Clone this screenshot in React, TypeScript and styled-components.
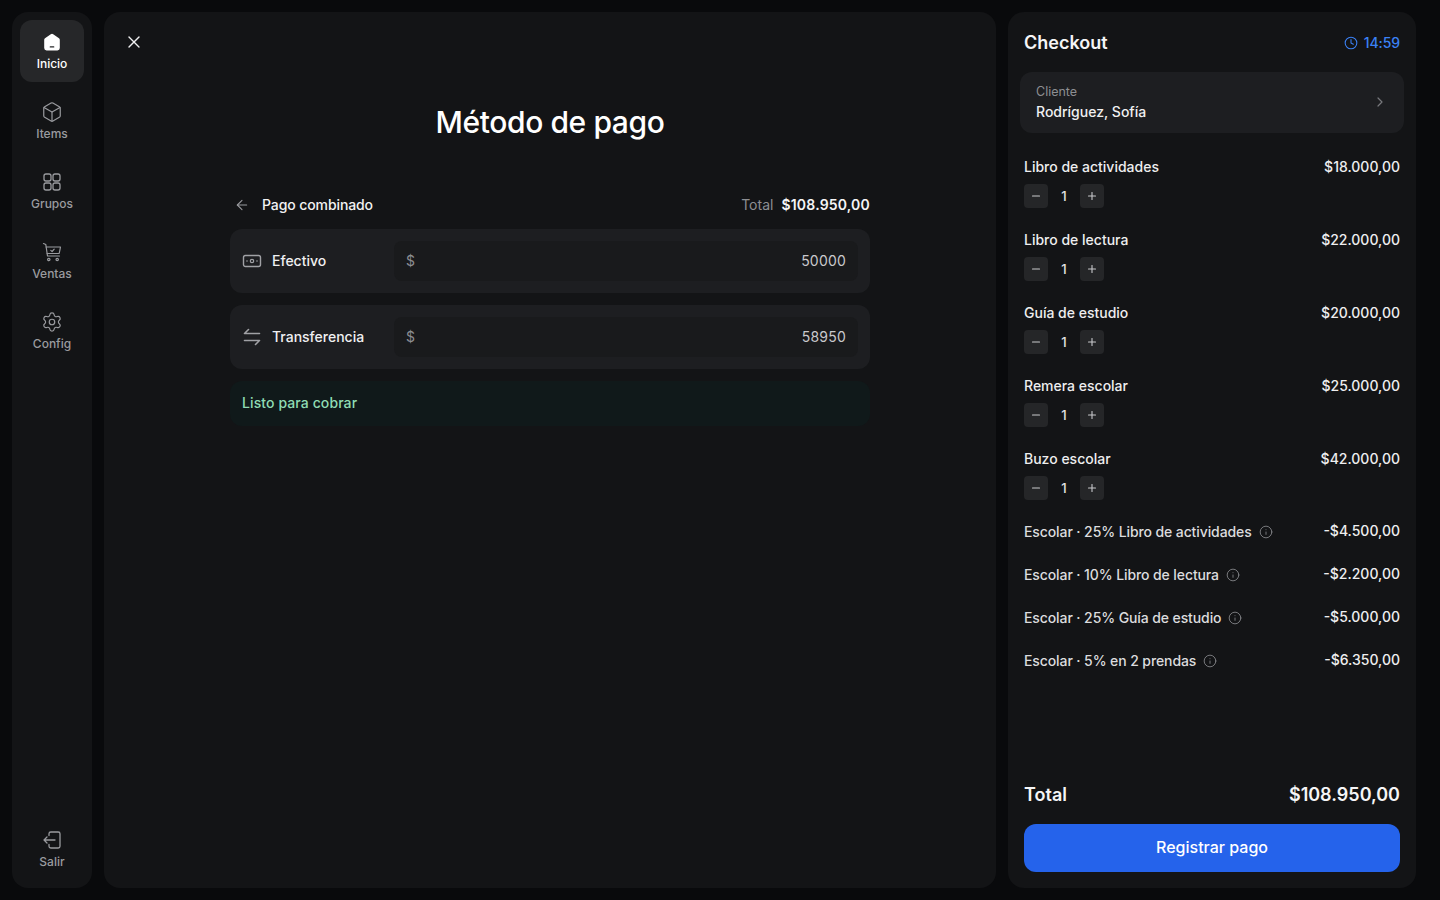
import React from 'react';
import styled, { createGlobalStyle } from 'styled-components';
import {
  ArrowLeft,
  Box,
  ChevronRight,
  Clock,
  Info,
  Minus,
  Plus,
  Settings,
  X,
} from 'lucide-react';

const GlobalStyle = createGlobalStyle`
  * { box-sizing: border-box; }
  html, body { margin: 0; height: 100%; }
  body {
    background: #090a0c;
    color: #f2f2f3;
    font-family: Inter, "Noto Sans", sans-serif;
    overflow: hidden;
  }
`;

const Page = styled.div`
  width: 100%;
  height: 900px;
  padding: 12px 24px 12px 12px;
  display: grid;
  grid-template-columns: 80px 1fr 408px;
  gap: 12px;
`;

const Panel = styled.div`
  background: #131416;
  border-radius: 16px;
  min-height: 0;
`;

const Sidebar = styled(Panel)`
  padding: 8px;
  display: flex;
  flex-direction: column;
  gap: 8px;
`;

const NavItem = styled.button<{ $active?: boolean; $bottom?: boolean }>`
  width: 64px;
  height: 62px;
  border: 0;
  padding: 11px 0 0;
  border-radius: 12px;
  background: ${(p) => (p.$active ? '#262729' : 'transparent')};
  color: ${(p) => (p.$active ? '#ffffff' : '#9a9b9f')};
  font: 500 12px/16px Inter, sans-serif;
  display: flex;
  flex-direction: column;
  align-items: center;
  gap: 3px;
  margin-top: ${(p) => (p.$bottom ? 'auto' : '0')};
  svg { display: block; }
`;

const Main = styled(Panel)`
  padding: 20px 20px 0;
  display: flex;
  flex-direction: column;
  align-items: center;
`;

const CloseButton = styled.button`
  align-self: flex-start;
  width: 20px;
  height: 20px;
  border: 0;
  padding: 0;
  background: none;
  color: #f0f0f1;
  display: flex;
`;

const Title = styled.h1`
  margin: 50px 0 0;
  font: 500 30px/40px Inter, sans-serif;
  letter-spacing: -0.4px;
  color: #ffffff;
`;

const Content = styled.div`
  width: 640px;
  margin-top: 51px;
  display: flex;
  flex-direction: column;
  gap: 12px;
`;

const ModeRow = styled.div`
  height: 24px;
  display: flex;
  align-items: center;
  justify-content: space-between;
`;

const ModeLeft = styled.div`
  display: flex;
  align-items: center;
  gap: 12px;
  padding-left: 4px;
  color: #9a9b9f;
  font: 500 14px/20px Inter, sans-serif;
  letter-spacing: -0.1px;
  span { color: #f2f2f3; }
`;

const ModeTotal = styled.div`
  display: flex;
  gap: 8px;
  font: 400 14px/20px Inter, sans-serif;
  color: #8d8e92;
  strong { font-weight: 600; color: #f5f5f6; letter-spacing: 0.2px; }
`;

const PayCard = styled.div`
  height: 64px;
  padding: 12px;
  background: #1d1e21;
  border-radius: 12px;
  display: flex;
  align-items: center;
`;

const PayLabel = styled.div`
  width: 152px;
  display: flex;
  align-items: center;
  gap: 10px;
  color: #f0f0f1;
  font: 500 14px/20px Inter, sans-serif;
  svg { color: #a0a1a5; flex: none; }
`;

const AmountBox = styled.div`
  flex: 1;
  height: 40px;
  padding: 0 12px;
  background: #191a1c;
  border-radius: 8px;
  display: flex;
  align-items: center;
  justify-content: space-between;
  font: 400 14px/20px Inter, sans-serif;
  letter-spacing: 0.2px;
  color: #c9c9cc;
  span:first-child { color: #8d8e92; }
`;

const ReadyBox = styled.div`
  height: 45px;
  padding: 0 12px 1px;
  background: #10191a;
  border-radius: 12px;
  display: flex;
  align-items: center;
  color: #8fdcb3;
  font: 500 14px/20px Inter, sans-serif;
  letter-spacing: 0.1px;
`;

const Checkout = styled(Panel)`
  padding: 16px;
  display: flex;
  flex-direction: column;
`;

const CheckoutHeader = styled.div`
  height: 28px;
  padding-top: 2px;
  display: flex;
  align-items: center;
  justify-content: space-between;
`;

const CheckoutTitle = styled.h2`
  margin: 0;
  font: 600 18px/26px Inter, sans-serif;
  color: #f5f5f6;
`;

const Timer = styled.div`
  display: flex;
  align-items: center;
  gap: 6px;
  color: #3b82f6;
  font: 500 14px/20px Inter, sans-serif;
  letter-spacing: -0.1px;
`;

const ClientCard = styled.div`
  margin: 16px -4px 0;
  height: 61px;
  padding: 0 16px;
  background: #1d1e21;
  border-radius: 12px;
  display: flex;
  align-items: center;
  justify-content: space-between;
  color: #77787c;
  svg { margin-bottom: 2px; }
`;

const ClientLabel = styled.div`
  font: 400 12.5px/18px Inter, sans-serif;
  color: #8d8e92;
`;

const ClientName = styled.div`
  margin-top: 1px;
  font: 500 14px/20px Inter, sans-serif;
  color: #f0f0f1;
`;

const Lines = styled.div`
  margin-top: 24px;
  display: flex;
  flex-direction: column;
  gap: 13px;
`;

const Item = styled.div`
  height: 60px;
  display: flex;
  flex-direction: column;
`;

const LineRow = styled.div`
  height: 20px;
  display: flex;
  justify-content: space-between;
  font: 500 14px/20px Inter, sans-serif;
  color: #eeeeef;
`;

const Stepper = styled.div`
  margin-top: 7px;
  display: flex;
  align-items: center;
`;

const StepButton = styled.button`
  width: 24px;
  height: 24px;
  border: 0;
  padding: 0;
  border-radius: 4px;
  background: #252628;
  color: #c9c9cc;
  display: flex;
  align-items: center;
  justify-content: center;
`;

const Qty = styled.span`
  width: 32px;
  padding-bottom: 1px;
  text-align: center;
  font: 500 13px/20px Inter, sans-serif;
  color: #e4e4e6;
`;

const Discounts = styled.div`
  margin-top: -1px;
  display: flex;
  flex-direction: column;
  gap: 23px;
`;

const DiscountLabel = styled.div`
  display: flex;
  align-items: center;
  gap: 7px;
  padding-top: 1px;
  letter-spacing: -0.1px;
  color: #dcdcde;
  svg { color: #8d8e92; }
`;

const TotalRow = styled.div`
  margin-top: auto;
  display: flex;
  justify-content: space-between;
  font: 600 18px/28px Inter, sans-serif;
  color: #f5f5f6;
`;

const PayButton = styled.button`
  margin-top: 15px;
  height: 48px;
  border: 0;
  padding: 0 0 2px;
  border-radius: 12px;
  background: #2563eb;
  color: #ffffff;
  font: 500 16px/24px Inter, sans-serif;
`;

const HomeIcon = () => (
  <svg width="22" height="22" viewBox="0 0 22 22">
    <path
      d="M9.8 3.3a2 2 0 0 1 2.4 0l5.8 4c.6.4.8 1 .8 1.7v8a2.4 2.4 0 0 1-2.4 2.4H5.6A2.4 2.4 0 0 1 3.2 17V9c0-.7.2-1.300.8-1.700z"
      fill="#fff"
    />
    <rect x="8.700" y="15.200" width="4.600" height="1.200" rx=".5" fill="#262729" />
  </svg>
);

const GridIcon = () => (
  <svg width="22" height="22" viewBox="0 0 22 22" fill="none" stroke="currentColor" strokeWidth="1.300">
    <rect x="3" y="3" width="7" height="7" rx="2" />
    <rect x="12" y="3" width="7" height="7" rx="2" />
    <rect x="3" y="12" width="7" height="7" rx="2" />
    <rect x="12" y="12" width="7" height="7" rx="2" />
  </svg>
);

const CartIcon = () => (
  <svg width="22" height="22" viewBox="0 0 22 22" fill="none" stroke="currentColor" strokeWidth="1.200" strokeLinecap="round" strokeLinejoin="round">
    <path d="M2.500 2.500l2.300 1 1.700 11.500h12" />
    <path d="M5.200 6h14.300l-1.300 6.500H6.100" />
    <path d="M9.800 9.400l1.300 1.100 2.100-2.300" />
    <circle cx="7.800" cy="18.500" r="1.200" />
    <circle cx="16.200" cy="18.500" r="1.200" />
  </svg>
);

const LogoutIcon = () => (
  <svg width="22" height="22" viewBox="0 0 22 22" fill="none" stroke="currentColor" strokeWidth="1.300" strokeLinecap="round" strokeLinejoin="round">
    <path d="M8 6.500V4.800A1.800 1.800 0 0 1 9.800 3h7.400A1.800 1.800 0 0 1 19 4.800v12.400a1.800 1.800 0 0 1-1.800 1.800H9.800A1.800 1.800 0 0 1 8 17.200v-1.700" />
    <path d="M14 11H3M6 8l-3 3 3 3" />
  </svg>
);

const CashIcon = () => (
  <svg width="20" height="20" viewBox="0 0 20 20" fill="none" stroke="currentColor" strokeWidth="1.400" strokeLinecap="round">
    <rect x="1.500" y="4.500" width="17" height="11" rx="2" />
    <circle cx="10" cy="10" r="1.700" strokeWidth="1.200" />
    <path d="M5 10h.01M15 10h.01" strokeWidth="1.600" />
  </svg>
);

const TransferIcon = () => (
  <svg width="20" height="20" viewBox="0 0 20 20" fill="none" stroke="currentColor" strokeWidth="1.600" strokeLinecap="round" strokeLinejoin="round">
    <path d="M17.500 6.500H2.500M2.500 6.500L6.500 2.500" />
    <path d="M2.500 13.500h15M17.500 13.500l-4 4" />
  </svg>
);

const navItems = [
  { label: 'Items', icon: <Box size={22} strokeWidth={1.3} /> },
  { label: 'Grupos', icon: <GridIcon /> },
  { label: 'Ventas', icon: <CartIcon /> },
  { label: 'Config', icon: <Settings size={22} strokeWidth={1.3} /> },
];

const items = [
  { name: 'Libro de actividades', price: '$18.000,00' },
  { name: 'Libro de lectura', price: '$22.000,00' },
  { name: 'Guía de estudio', price: '$20.000,00' },
  { name: 'Remera escolar', price: '$25.000,00' },
  { name: 'Buzo escolar', price: '$42.000,00' },
];

const discounts = [
  { name: 'Escolar · 25% Libro de actividades', amount: '-$4.500,00' },
  { name: 'Escolar · 10% Libro de lectura', amount: '-$2.200,00' },
  { name: 'Escolar · 25% Guía de estudio', amount: '-$5.000,00' },
  { name: 'Escolar · 5% en 2 prendas', amount: '-$6.350,00' },
];

export default function App() {
  return (
    <>
      <GlobalStyle />
      <Page>
        <Sidebar>
          <NavItem $active>
            <HomeIcon />
            Inicio
          </NavItem>
          {navItems.map((item) => (
            <NavItem key={item.label}>
              {item.icon}
              {item.label}
            </NavItem>
          ))}
          <NavItem $bottom>
            <LogoutIcon />
            Salir
          </NavItem>
        </Sidebar>

        <Main>
          <CloseButton>
            <X size={20} strokeWidth={1.6} />
          </CloseButton>
          <Title>Método de pago</Title>
          <Content>
            <ModeRow>
              <ModeLeft>
                <ArrowLeft size={16} strokeWidth={1.6} />
                <span>Pago combinado</span>
              </ModeLeft>
              <ModeTotal>
                Total <strong>$108.950,00</strong>
              </ModeTotal>
            </ModeRow>
            <PayCard>
              <PayLabel>
                <CashIcon />
                Efectivo
              </PayLabel>
              <AmountBox>
                <span>$</span>
                <span>50000</span>
              </AmountBox>
            </PayCard>
            <PayCard>
              <PayLabel>
                <TransferIcon />
                Transferencia
              </PayLabel>
              <AmountBox>
                <span>$</span>
                <span>58950</span>
              </AmountBox>
            </PayCard>
            <ReadyBox>Listo para cobrar</ReadyBox>
          </Content>
        </Main>

        <Checkout>
          <CheckoutHeader>
            <CheckoutTitle>Checkout</CheckoutTitle>
            <Timer>
              <Clock size={14} strokeWidth={1.8} />
              14:59
            </Timer>
          </CheckoutHeader>
          <ClientCard>
            <div>
              <ClientLabel>Cliente</ClientLabel>
              <ClientName>Rodríguez, Sofía</ClientName>
            </div>
            <ChevronRight size={16} strokeWidth={1.8} />
          </ClientCard>
          <Lines>
            {items.map((item) => (
              <Item key={item.name}>
                <LineRow>
                  <span>{item.name}</span>
                  <span>{item.price}</span>
                </LineRow>
                <Stepper>
                  <StepButton>
                    <Minus size={12} strokeWidth={2.2} />
                  </StepButton>
                  <Qty>1</Qty>
                  <StepButton>
                    <Plus size={12} strokeWidth={2.2} />
                  </StepButton>
                </Stepper>
              </Item>
            ))}
            <Discounts>
              {discounts.map((d) => (
                <LineRow key={d.name}>
                  <DiscountLabel>
                    {d.name}
                    <Info size={14} strokeWidth={1.4} />
                  </DiscountLabel>
                  <span>{d.amount}</span>
                </LineRow>
              ))}
            </Discounts>
          </Lines>
          <TotalRow>
            <span>Total</span>
            <span>$108.950,00</span>
          </TotalRow>
          <PayButton>Registrar pago</PayButton>
        </Checkout>
      </Page>
    </>
  );
}
